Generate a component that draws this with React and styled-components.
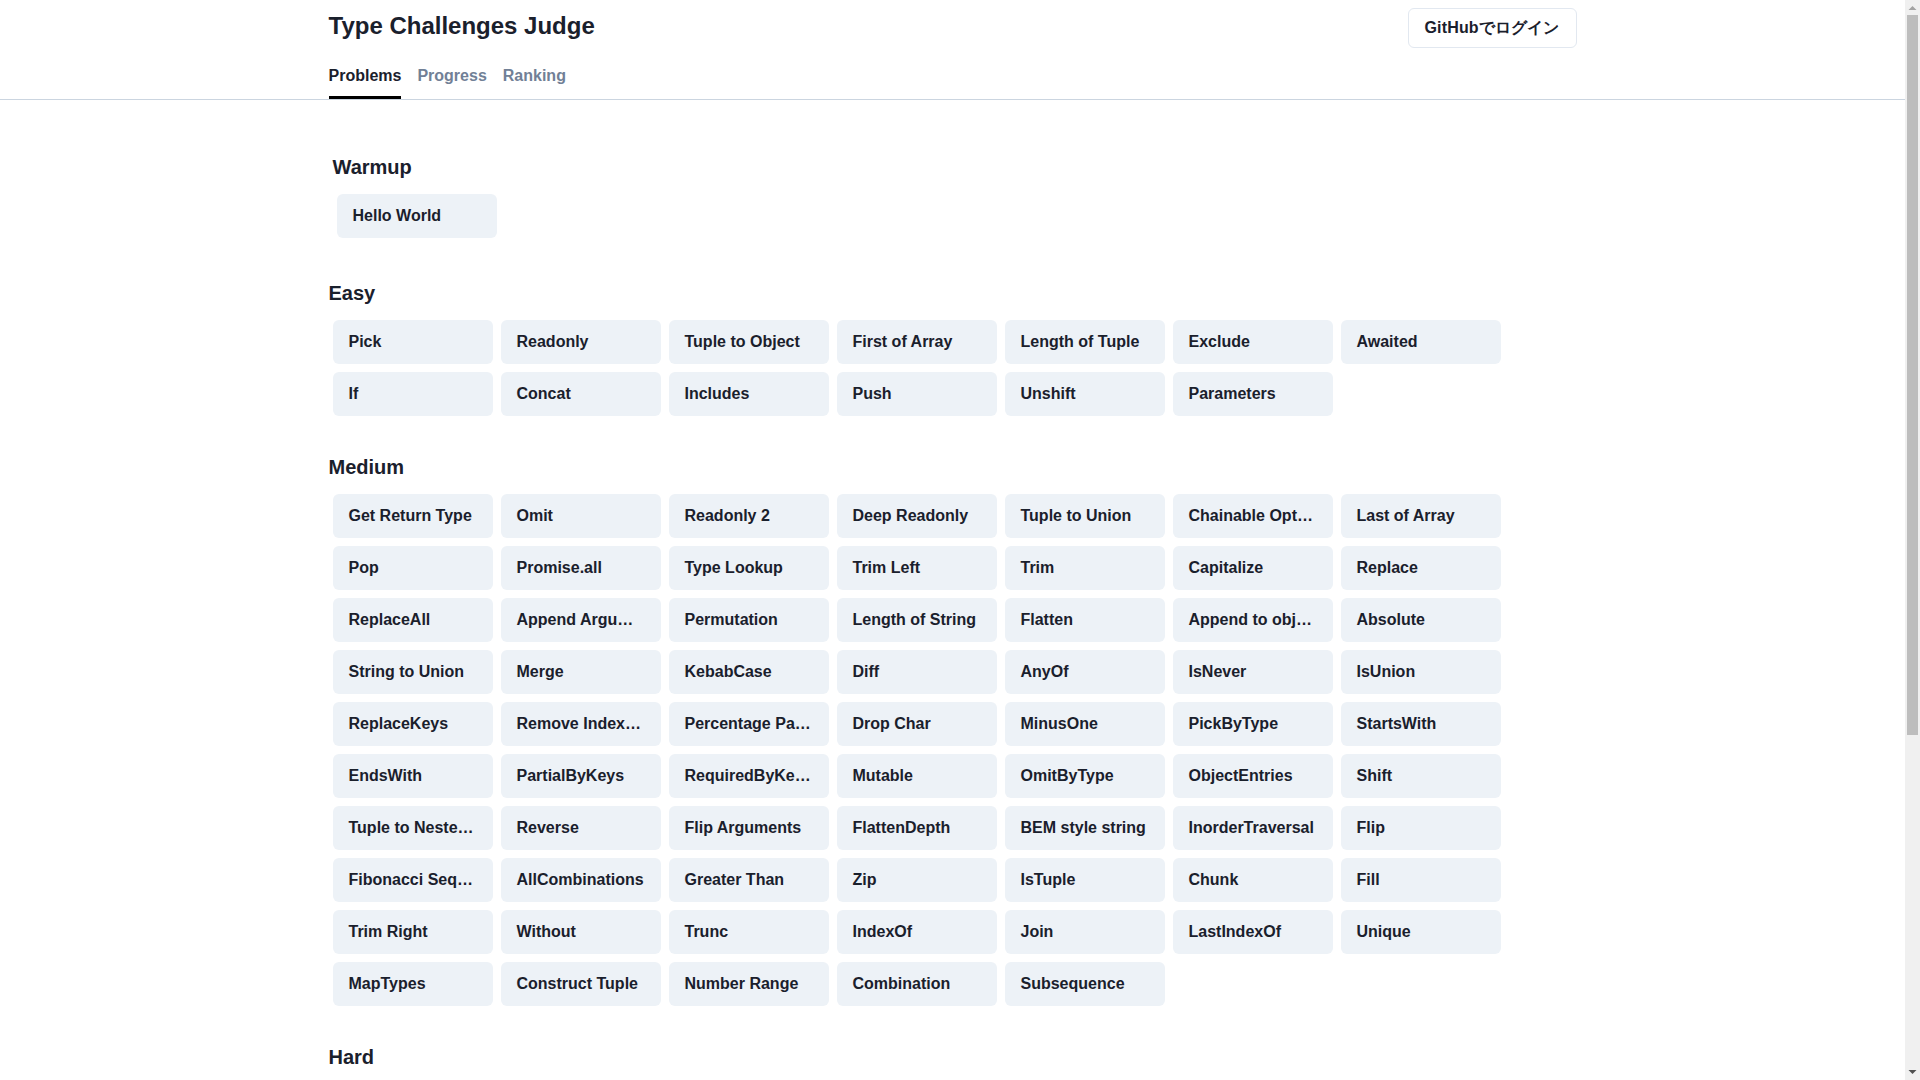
import React from "react";
import styled, { createGlobalStyle } from "styled-components";

const Global = createGlobalStyle`
  html, body { margin: 0; padding: 0; background: #fff; }
  body { font-family: "Liberation Sans", Arial, sans-serif; color: #1a202c; line-height: 1.5; padding-right: 15px; }
  * { box-sizing: border-box; }
`;

const Header = styled.header`
  border-bottom: 1px solid #cbd5e0;
  height: 100px;
`;
const HeaderInner = styled.div`
  width: 1248px;
  margin: 0 auto;
  height: 100%;
  display: flex;
  flex-direction: column;
  justify-content: space-between;
`;
const TopRow = styled.div`
  display: flex;
  justify-content: space-between;
  align-items: flex-start;
  padding-top: 8px;
`;
const Title = styled.h1`
  margin: 0;
  font-size: 24px;
  line-height: 36px;
  font-weight: 700;
`;
const LoginButton = styled.button`
  height: 40px;
  padding: 0 16px;
  background: #fff;
  border: 1px solid #e2e8f0;
  border-radius: 6px;
  font: 700 16px "Liberation Sans", Arial, sans-serif;
  letter-spacing: 0.15px;
  color: #1a202c;
`;
const Tabs = styled.nav`
  display: flex;
  gap: 16px;
`;
const Tab = styled.a`
  height: 40px;
  display: flex;
  align-items: center;
  font-size: 16px;
  font-weight: 700;
  color: ${(p) => (p.$active ? "#1a202c" : "#718096")};
  border-bottom: 3px solid ${(p) => (p.$active ? "#000" : "transparent")};
  padding-bottom: 3px;
`;
const Main = styled.main`
  width: 1248px;
  margin: 0 auto;
  padding-top: 48px;
  padding-bottom: 9px;
`;
const Section = styled.section`
  padding: ${(p) => (p.$inset ? "4px" : "0")};
  margin-bottom: 36px;
  &:last-child { margin-bottom: 0; }
`;
const Heading = styled.h2`
  margin: 0 0 12px;
  font-size: 20px;
  line-height: 30px;
  font-weight: 700;
`;
const Grid = styled.ul`
  list-style: none;
  margin: 0;
  padding: 0 4px;
  display: grid;
  grid-template-columns: repeat(7, 160px);
  gap: 8px;
`;
const Card = styled.li`
  height: 44px;
  padding: 0 16px;
  background: #edf2f7;
  border-radius: 6px;
  font-size: 16px;
  font-weight: 700;
  line-height: 44px;
  white-space: nowrap;
  overflow: hidden;
  text-overflow: ellipsis;
`;
const ScrollTrack = styled.div`
  position: fixed;
  top: 0;
  right: 0;
  bottom: 0;
  width: 15px;
  background: #f0f0f0;
  display: flex;
  flex-direction: column;
  align-items: center;
  justify-content: space-between;
`;
const ScrollThumb = styled.div`
  position: absolute;
  top: 15px;
  left: 2px;
  width: 11px;
  height: 720px;
  background: #bdbdbd;
`;
const ArrowBox = styled.svg`
  width: 15px;
  height: 15px;
  display: block;
`;

const sections = [
  { name: "Warmup", inset: true, items: ["Hello World"] },
  { name: "Easy", items: ["Pick", "Readonly", "Tuple to Object", "First of Array", "Length of Tuple", "Exclude", "Awaited", "If", "Concat", "Includes", "Push", "Unshift", "Parameters"] },
  { name: "Medium", items: ["Get Return Type", "Omit", "Readonly 2", "Deep Readonly", "Tuple to Union", "Chainable Options", "Last of Array", "Pop", "Promise.all", "Type Lookup", "Trim Left", "Trim", "Capitalize", "Replace", "ReplaceAll", "Append Argument", "Permutation", "Length of String", "Flatten", "Append to object", "Absolute", "String to Union", "Merge", "KebabCase", "Diff", "AnyOf", "IsNever", "IsUnion", "ReplaceKeys", "Remove Index Signature", "Percentage Parser", "Drop Char", "MinusOne", "PickByType", "StartsWith", "EndsWith", "PartialByKeys", "RequiredByKeys", "Mutable", "OmitByType", "ObjectEntries", "Shift", "Tuple to Nested Object", "Reverse", "Flip Arguments", "FlattenDepth", "BEM style string", "InorderTraversal", "Flip", "Fibonacci Sequence", "AllCombinations", "Greater Than", "Zip", "IsTuple", "Chunk", "Fill", "Trim Right", "Without", "Trunc", "IndexOf", "Join", "LastIndexOf", "Unique", "MapTypes", "Construct Tuple", "Number Range", "Combination", "Subsequence"] },
  { name: "Hard", items: ["Simple Vue", "Currying 1", "Union to Intersection", "Get Required", "Get Optional", "Required Keys", "Optional Keys", "Capitalize Words", "CamelCase", "C-printf Parser", "Vue Basic Props", "IsAny", "Typed Get", "String to Number", "Tuple Filter", "Tuple to Enum Object", "printf", "Deep object to unique", "Length of String 2", "Union to Tuple", "String Join", "DeepPick", "Pinia", "Camelize", "Drop String", "Split", "ClassPublicKeys", "IsRequiredKey", "ObjectFromEntries", "IsPalindrome", "Mutable Keys", "Intersection", "Binary to Decimal", "Object Key Paths", "Two Sum", "ValidDate", "Assign", "Maximum", "Capitalize Nest Object Keys", "Replace Union", "FizzBuzz", "Run-length encoding"] },
  { name: "Extreme", items: ["Get Readonly Keys", "Query String Parser", "Slice", "Integers Comparator", "Currying 2", "Sum", "Multiply", "Tag", "Inclusive Range", "Sort", "DistributeUnions", "Assert Array Index", "JSON Parser", "Subtract"] },
];

export default function App() {
  return (
    <>
      <Global />
      <Header>
        <HeaderInner>
          <TopRow>
            <Title>Type Challenges Judge</Title>
            <LoginButton>GitHubでログイン</LoginButton>
          </TopRow>
          <Tabs>
            <Tab $active>Problems</Tab>
            <Tab>Progress</Tab>
            <Tab>Ranking</Tab>
          </Tabs>
        </HeaderInner>
      </Header>
      <Main>
        {sections.map((s) => (
          <Section key={s.name} $inset={s.inset}>
            <Heading>{s.name}</Heading>
            <Grid>
              {s.items.map((item) => (
                <Card key={item}>{item}</Card>
              ))}
            </Grid>
          </Section>
        ))}
      </Main>
      <ScrollTrack aria-hidden="true">
        <ArrowBox viewBox="0 0 15 15"><polygon points="7.5,6 11.5,10 3.5,10" fill="#a3a3a3" /></ArrowBox>
        <ScrollThumb />
        <ArrowBox viewBox="0 0 15 15"><polygon points="3.5,5 11.5,5 7.5,9" fill="#505050" /></ArrowBox>
      </ScrollTrack>
    </>
  );
}
